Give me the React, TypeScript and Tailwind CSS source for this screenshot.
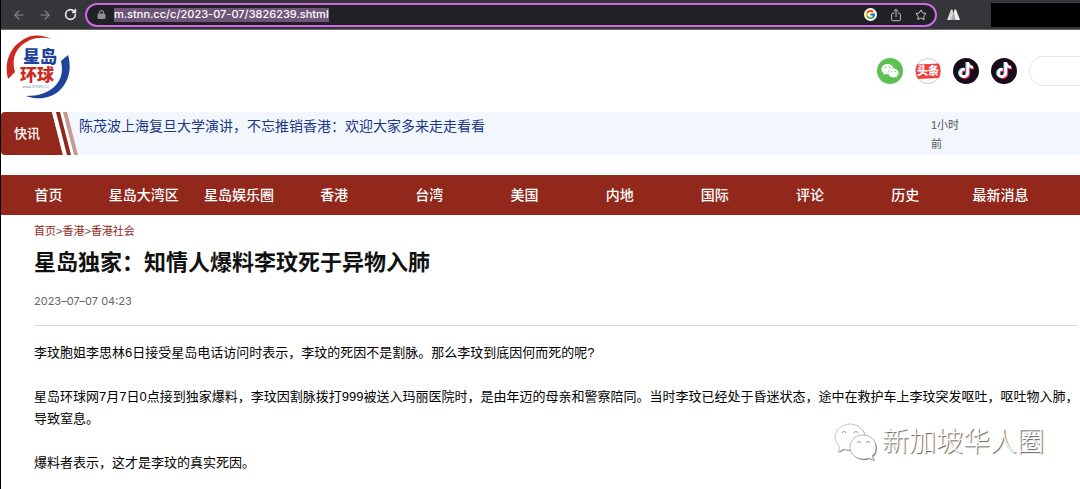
import { useState } from 'react';
import { ArrowLeft, ArrowRight, RotateCw, Star } from 'lucide-react';
import { FcGoogle } from 'react-icons/fc';
import { FaTiktok, FaWeixin, FaLock } from 'react-icons/fa6';
import { IoShareOutline } from 'react-icons/io5';

const navItems = [
  '首页',
  '星岛大湾区',
  '星岛娱乐圈',
  '香港',
  '台湾',
  '美国',
  '内地',
  '国际',
  '评论',
  '历史',
  '最新消息',
];

const paragraphs = [
  '李玟胞姐李思林6日接受星岛电话访问时表示，李玟的死因不是割脉。那么李玟到底因何而死的呢?',
  '星岛环球网7月7日0点接到独家爆料，李玟因割脉拨打999被送入玛丽医院时，是由年迈的母亲和警察陪同。当时李玟已经处于昏迷状态，途中在救护车上李玟突发呕吐，呕吐物入肺，导致窒息。',
  '爆料者表示，这才是李玟的真实死因。',
];

function BrowserBar() {
  const [url, setUrl] = useState('m.stnn.cc/c/2023-07-07/3826239.shtml');

  return (
    <div className="flex h-[30px] items-center border-b border-[#69696c] bg-[#35363a] pl-[11px] font-['Inter','Liberation_Sans',sans-serif]">
      <div className="flex items-center gap-3">
        <button type="button" aria-label="后退" className="text-[#87888b]">
          <ArrowLeft className="size-[14px]" strokeWidth={2} />
        </button>
        <button type="button" aria-label="前进" className="text-[#87888b]">
          <ArrowRight className="size-[14px]" strokeWidth={2} />
        </button>
        <button type="button" aria-label="刷新" className="text-[#e8eaed]">
          <RotateCw className="size-[13px]" strokeWidth={3} />
        </button>
      </div>

      <div className="ml-2 flex h-6 flex-1 items-center rounded-full border-2 border-[#d267e6] bg-[#202124] pr-2 pl-[10px]">
        <FaLock className="size-[9px] text-[#8f9093]" />
        <input
          type="text"
          aria-label="地址栏"
          value={url}
          onChange={(e) => setUrl(e.target.value)}
          className="ml-2 field-sizing-content h-[14px] bg-[#6f5577] text-[11px] font-medium text-white outline-none"
        />
        <div className="ml-auto flex items-center gap-3">
          <span className="flex size-[13px] items-center justify-center rounded-full bg-white">
            <FcGoogle className="size-[11px]" />
          </span>
          <button type="button" aria-label="分享" className="text-[#d0d1d3]">
            <IoShareOutline className="size-[14px]" />
          </button>
          <button type="button" aria-label="收藏" className="text-[#d0d1d3]">
            <Star className="size-[12px]" strokeWidth={2} />
          </button>
        </div>
      </div>

      <svg viewBox="0 0 26 22" className="ml-[10px] h-[11px] w-[13px]" aria-hidden="true">
        <path d="M0 22 8 1h3l4 21z" fill="#d8d8d8" />
        <path d="M11 22 15 1h3l8 21z" fill="#f2f2f2" />
        <path d="m13 5 5 17H8z" fill="#aaa" />
      </svg>
      <div className="ml-[31px] h-6 w-[89px] bg-black" />
    </div>
  );
}

function Logo() {
  return (
    <svg viewBox="0 0 64 64" className="size-16" role="img" aria-label="星岛环球">
      <path d="M45 4C36-1 24-1 15 6 3 14-2 29 2 44l7-7C6 27 8 18 14 12 22 4 33 1 45 4z" fill="#cb2a20" />
      <path d="M62 20c4 13 1 27-9 36-9 8-22 9-33 5 12 0 23-3 30-11 6-7 7-15 5-24z" fill="#1f429b" />
      <g fontFamily="Noto Sans CJK SC, sans-serif" fontWeight="900" textAnchor="middle">
        <text x="34" y="28" fontSize="17" fill="#1f429b">
          星岛
        </text>
        <text x="31" y="46" fontSize="17" fill="#cb2a20">
          环球
        </text>
      </g>
      <text x="30" y="53" fontFamily="Liberation Sans, sans-serif" fontSize="4" fill="#7c8cb8" textAnchor="middle">
        www.STNN.CC
      </text>
    </svg>
  );
}

function TiktokIcon() {
  return (
    <a href="#" aria-label="抖音">
      <svg viewBox="0 0 26 26" className="size-[26px]">
        <circle cx="13" cy="13" r="13" fill="#1b0b1a" />
        <FaTiktok x="4" y="4" width="17" height="18" color="#3fe6e4" />
        <FaTiktok x="6" y="5" width="17" height="18" color="#f5335b" />
        <FaTiktok x="5" y="4" width="17" height="18" color="#fff" />
      </svg>
    </a>
  );
}

function SiteHeader() {
  return (
    <header className="flex h-[82px] items-center pl-[5px]">
      <a href="#" className="-mt-2">
        <Logo />
      </a>
      <div className="ml-auto flex items-center gap-3">
        <a
          href="#"
          aria-label="微信"
          className="flex size-[26px] items-center justify-center rounded-full bg-[#5dc052] text-white"
        >
          <FaWeixin className="size-[18px]" />
        </a>
        <a href="#" aria-label="头条">
          <svg viewBox="0 0 26 26" className="size-[26px]">
            <circle cx="13" cy="13" r="12.5" fill="#fff" stroke="#ccc" />
            <path d="M2 6.500 24 5.500Q27 13 24 20L3 21Q-1 14 2 6.500z" fill="#ed4040" />
            <text
              x="13"
              y="17"
              fontFamily="Noto Sans CJK SC, sans-serif"
              fontSize="11"
              fontWeight="900"
              fill="#fff"
              textAnchor="middle"
            >
              头条
            </text>
          </svg>
        </a>
        <TiktokIcon />
        <TiktokIcon />
        <input
          type="search"
          aria-label="搜索"
          className="h-[30px] w-[51px] rounded-l-full border border-r-0 border-[#e6e6e6] bg-white pl-4 text-xs outline-none"
        />
      </div>
    </header>
  );
}

function NewsFlash() {
  return (
    <div className="flex h-[43px] overflow-hidden rounded-l bg-[#f2f7fe]">
      <div className="grid w-[77px]">
        <svg viewBox="0 0 77 43" className="col-start-1 row-start-1 h-[43px] w-[77px]" aria-hidden="true">
          <path d="M0 0h51l11 43H0z" fill="#92281b" />
          <path d="M51 0h4l11 43h-4zM59 0h3l11 43h-4z" fill="#fff" />
          <path d="M55 0h4l11 43h-4z" fill="#92281b" />
          <path d="M62 0h4l11 43h-4z" fill="#c99892" />
        </svg>
        <span className="col-start-1 row-start-1 self-center pl-[13px] text-[13px] font-medium text-white">快讯</span>
      </div>
      <a href="#" className="mt-1 ml-px text-[14px] leading-5 text-[#1c3687]">
        陈茂波上海复旦大学演讲，不忘推销香港：欢迎大家多来走走看看
      </a>
      <span className="mt-1 mr-[119px] ml-auto w-[30px] text-[11px] leading-[19px] text-[#555]">1小时前</span>
    </div>
  );
}

function Article() {
  return (
    <article className="pl-[33px]">
      <div className="mt-[6px] flex text-[11px] leading-5 text-[#555]">
        <a href="#" className="text-[#92281b]">首页</a>
        <span>&gt;</span>
        <a href="#" className="text-[#92281b]">香港</a>
        <span>&gt;</span>
        <a href="#" className="text-[#92281b]">香港社会</a>
      </div>
      <h1 className="mt-[6px] text-[22px] leading-8 font-bold text-[#111]">星岛独家：知情人爆料李玟死于异物入肺</h1>
      <time className="mt-3 block font-['Inter',sans-serif] text-[11px] leading-5 text-[#666]">
        2023–07–07 04:23
      </time>
      <hr className="mt-[14px] mr-[2px] border-[#d9d9d9]" />
      <div className="mt-4 flex flex-col gap-[22px] text-[13px] leading-[22px] text-black">
        {paragraphs.map((text) => (
          <p key={text}>{text}</p>
        ))}
      </div>
    </article>
  );
}

function Watermark() {
  return (
    <div className="pointer-events-none absolute right-9 bottom-[28px] flex items-center gap-[5px]">
      <svg viewBox="0 0 44 38" className="h-[38px] w-11" aria-hidden="true">
        <path d="M18 2C10 2 3 8 3 15c0 4 2 7 5 10l-2 5 6-3c2 1 4 1 6 1 8 0 15-6 15-13S26 2 18 2z" fill="#999" />
        <path d="M17 1C9 1 2 7 2 14c0 4 2 7 5 10l-2 5 6-3c2 1 4 1 6 1 8 0 15-6 15-13S25 1 17 1z" fill="#fff" stroke="#aaa" strokeWidth="0.7" />
        <path d="M31 13c-7 0-13 5-13 12s6 12 13 12c2 0 4 0 5-1l6 2-2-4c3-2 4-5 4-9 0-7-6-12-13-12z" fill="#888" />
        <path d="M30 12c-7 0-13 5-13 12s6 12 13 12c2 0 4 0 5-1l6 2-2-4c3-2 4-5 4-9 0-7-6-12-13-12z" fill="#fff" stroke="#999" strokeWidth="0.7" />
        <path d="M9 10c1-2 3-2 4 0M21 10c1-2 3-2 4 0M24 20c1-2 3-2 4 0M33 20c1-2 3-2 4 0" fill="none" stroke="#888" />
      </svg>
      <span className="text-[27px] leading-8 font-light text-white [text-shadow:1px_1px_1px_#555]">
        新加坡华人圈
      </span>
    </div>
  );
}

export default function App() {
  return (
    <div className="relative min-h-screen overflow-hidden border-l border-black bg-white font-['Liberation_Sans','Noto_Sans_CJK_SC',sans-serif]">
      <BrowserBar />
      <SiteHeader />
      <NewsFlash />

      {/* 主导航 */}
      <nav className="mt-5 grid h-10 grid-cols-11 items-center bg-[#92281b] pr-8 text-center text-[14px] font-medium text-white">
        {navItems.map((item) => (
          <a key={item} href="#">
            {item}
          </a>
        ))}
      </nav>

      <Article />
      <Watermark />
    </div>
  );
}
